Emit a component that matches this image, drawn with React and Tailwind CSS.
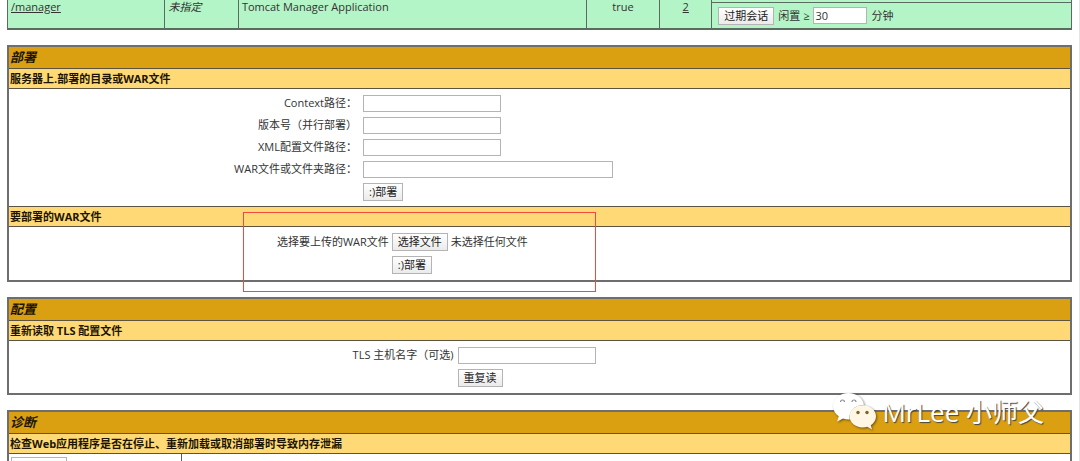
import React, { useRef } from "react";

const BUTTON =
  "h-[18px] border border-[#b4b4b4] bg-linear-to-b from-white to-[#ebebeb] px-[5px] leading-4 whitespace-nowrap text-[#222]";
const INPUT = "h-[17px] border border-[#b4b4b4] bg-white px-1";

function Section({ title, children }) {
  return (
    <section className="mt-[15px] border-2 border-[#6e6e6e]">
      <h2 className="bg-[#daa012] px-px text-[13px] leading-[21px] font-bold text-[#1c1400] italic">
        {title}
      </h2>
      {children}
    </section>
  );
}

function SubTitle({ children }) {
  return (
    <h3 className="border-y border-[#5c5440] bg-[#ffd975] px-px leading-[19px] font-bold text-[#1c1400]">
      {children}
    </h3>
  );
}

function Field({ id, label, wide }) {
  return (
    <>
      <label htmlFor={id} className="text-right">
        {label}
      </label>
      <input
        id={id}
        type="text"
        className={`${INPUT} ${wide ? "w-[250px]" : "w-[138px]"}`}
      />
    </>
  );
}

function AppsTable() {
  const cell = "border border-[#5a6b60] px-[3px] align-top";
  return (
    <table className="w-full border-collapse border-b-2 border-[#5a6b60] bg-[#b3f5c6] leading-[13px]">
      <colgroup>
        <col className="w-[14.8%]" />
        <col className="w-[6.9%]" />
        <col className="w-[32.7%]" />
        <col className="w-[6.9%]" />
        <col className="w-[4.9%]" />
        <col />
      </colgroup>
      <tbody>
        <tr>
          <td rowSpan={2} className={`${cell} border-t-0`}>
            <a href="#manager" className="underline">
              /manager
            </a>
          </td>
          <td rowSpan={2} className={`${cell} border-t-0 italic`}>
            未指定
          </td>
          <td rowSpan={2} className={`${cell} border-t-0`}>
            Tomcat Manager Application
          </td>
          <td rowSpan={2} className={`${cell} border-t-0 text-center`}>
            true
          </td>
          <td rowSpan={2} className={`${cell} border-t-0 text-center`}>
            <a href="#sessions" className="underline">
              2
            </a>
          </td>
          <td className="h-0.5 border-x border-b border-[#5a6b60] p-0" />
        </tr>
        <tr>
          <td className="border border-[#5a6b60] px-1.5 pt-1 pb-[3px]">
            <form className="flex items-center gap-1">
              <button type="button" className={BUTTON}>
                过期会话
              </button>
              <label htmlFor="idle">闲置 ≥</label>
              <input
                id="idle"
                type="text"
                defaultValue="30"
                className="h-[17px] w-[54px] border border-[#b4b4b4] bg-white px-px"
              />
              <span>分钟</span>
            </form>
          </td>
        </tr>
      </tbody>
    </table>
  );
}

function UploadForm() {
  const fileRef = useRef(null);
  return (
    <form className="grid grid-cols-[35.8%_1fr] items-center justify-items-start gap-x-[3px] gap-y-[5px] py-1.5">
      <label htmlFor="war" className="justify-self-end">
        选择要上传的WAR文件
      </label>
      <div className="flex items-center gap-[3px]">
        <input id="war" ref={fileRef} type="file" className="sr-only" />
        <button
          type="button"
          className={BUTTON}
          onClick={() => fileRef.current.click()}
        >
          选择文件
        </button>
        <span>未选择任何文件</span>
      </div>
      <button type="button" className={`${BUTTON} col-start-2`}>
        :)部署
      </button>
    </form>
  );
}

function Watermark() {
  return (
    <div className="absolute right-[35px] bottom-[30px] flex items-center gap-[5px] text-white">
      <svg
        viewBox="0 0 44 38"
        className="h-[38px] w-11 drop-shadow-[1px_1px_1px_rgba(0,0,0,0.5)]"
        aria-hidden="true"
      >
        <path
          fill="#fff"
          d="M15.500 0C7 0 0 5.800 0 13c0 4.200 2.200 7.800 5.800 10.200L4.200 28.500l5.800-3c2 .6 3.800.9 5.700.9h1C15.300 19 21 12 31 11.700 29.800 5 23.300 0 15.500 0z"
        />
        <path
          fill="#fff6e4"
          d="M43 23.300c0-6.200-6-11.100-13.200-11.100S16.500 17.100 16.500 23.300s6 11.100 13.300 11.100c1.600 0 3.100-.2 4.500-.7l4.700 2.800-1.200-4.200c3.200-2.100 5.200-5.300 5.200-9z"
        />
        <g fill="none" stroke="#8a8a8a" strokeWidth="1.200">
          <path d="M7.500 9a2 2 0 0 1 4 0M19 9a2 2 0 0 1 4 0" />
        </g>
        <g fill="#7d6220">
          <circle cx="25" cy="19.500" r="1.700" />
          <circle cx="34" cy="19.500" r="1.700" />
        </g>
      </svg>
      <span className="text-[26px] leading-8 [text-shadow:1px_1px_1px_#444]">
        MrLee 小师父
      </span>
    </div>
  );
}

export default function App() {
  return (
    <main className="relative h-screen overflow-hidden border-r border-[#e4e4e4] bg-white px-[7px] font-['Open_Sans','Noto_Sans_CJK_SC',sans-serif] text-[11px] leading-4 text-[#333]">
      <AppsTable />

      <div className="relative">
        <Section title="部署">
          <SubTitle>服务器上.部署的目录或WAR文件</SubTitle>
          <form className="grid grid-cols-[32.8%_1fr] items-center gap-x-1.5 gap-y-[5px] pt-1.5 pb-[5px]">
            <Field id="path" label="Context路径：" />
            <Field id="version" label="版本号（并行部署）" />
            <Field id="config" label="XML配置文件路径：" />
            <Field id="folder" label="WAR文件或文件夹路径：" wide />
            <button
              type="button"
              className={`${BUTTON} col-start-2 justify-self-start`}
            >
              :)部署
            </button>
          </form>
          <SubTitle>要部署的WAR文件</SubTitle>
          <UploadForm />
        </Section>
        <div className="pointer-events-none absolute -bottom-2.5 left-[22.2%] h-20 w-[33.1%] border border-[#f04a3e]" />
      </div>

      <Section title="配置">
        <SubTitle>重新读取 TLS 配置文件</SubTitle>
        <form className="grid grid-cols-[41.9%_1fr] items-center gap-x-1 gap-y-[5px] py-1.5">
          <Field id="tls" label="TLS 主机名字（可选)" />
          <button
            type="button"
            className={`${BUTTON} col-start-2 justify-self-start`}
          >
            重复读
          </button>
        </form>
      </Section>

      <Section title="诊断">
        <SubTitle>检查Web应用程序是否在停止、重新加载或取消部署时导致内存泄漏</SubTitle>
        <div className="grid grid-cols-[16.3%_1fr]">
          <div className="border-r border-[#5c5c5c] px-0.5 py-[3px]">
            <button
              type="button"
              aria-label="发现泄漏"
              className={`${BUTTON} block w-14`}
            />
          </div>
          <div />
        </div>
      </Section>

      <Watermark />
    </main>
  );
}
